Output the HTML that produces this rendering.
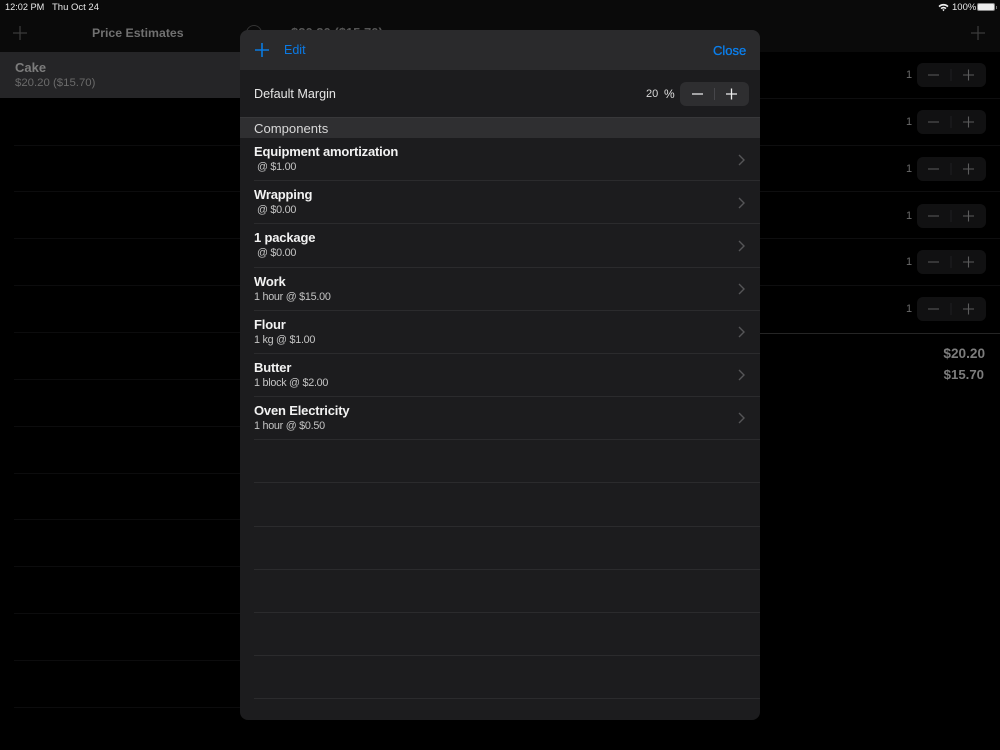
<!DOCTYPE html>
<html><head><meta charset="utf-8"><style>
html,body{margin:0;padding:0;background:#000}
#p{position:relative;width:1000px;height:750px;overflow:hidden;background:#000;font-family:"Liberation Sans",sans-serif;}
#p div,#p span.a,#p svg{position:absolute}
.t{white-space:nowrap;line-height:1}
.ls{left:14px;width:226px;height:1px;background:#0c0c0d}
.rs{left:760px;width:240px;height:1px;background:#0e0e0f}
.st{left:917px;width:69px;height:24px;border-radius:6px;background:#111112}
.n{left:906px;font-size:11px;color:#6a6a6a}
.row{left:254px;font-size:13px;font-weight:bold;color:#f2f2f2;letter-spacing:-.18px}
.sub{font-size:10.8px;color:#c4c4c4;letter-spacing:-.27px}
.sep{left:254px;width:506px;height:1px;background:#2b2b2d}
</style></head><body><div id="p">
<div style="left:0;top:0;width:1000px;height:52px;background:#0a0a0a"></div>
<div style="left:0;top:52px;width:240px;height:46px;background:#252527"></div>
<div class="t" style="left:5px;top:3px;font-size:9.2px;color:#e8e8e8">12:02 PM</div>
<div class="t" style="left:52px;top:3px;font-size:9.5px;color:#e8e8e8">Thu Oct 24</div>
<svg style="left:938px;top:3px" width="11" height="9" viewBox="0 0 11 9"><path d="M0.5 3 A7 7 0 0 1 10.5 3 L9.3 4.2 A5.3 5.3 0 0 0 1.7 4.2Z M2.5 5 A4.2 4.2 0 0 1 8.5 5 L7.4 6.1 A2.7 2.7 0 0 0 3.6 6.1Z M4.4 6.9 A1.5 1.5 0 0 1 6.6 6.9 L5.5 8.2Z" fill="#eee"/></svg>
<div class="t" style="left:952px;top:3px;font-size:9.5px;color:#e8e8e8">100%</div>
<div style="left:977px;top:3px;width:18px;height:8px;background:#eee;border-radius:2px;border:1px solid #888;box-sizing:border-box"></div>
<div style="left:995.5px;top:6px;width:1.5px;height:3px;background:#777"></div>
<svg style="left:13px;top:26px" width="14" height="14"><path d="M7 0V14M0 7H14" stroke="#3a3a3a" stroke-width="1.3"/></svg>
<svg style="left:971px;top:26px" width="14" height="14"><path d="M7 0V14M0 7H14" stroke="#3a3a3a" stroke-width="1.3"/></svg>
<div class="t" style="left:92px;top:27px;font-size:12.3px;font-weight:bold;color:#707070">Price Estimates</div>
<div style="left:246px;top:25px;width:14px;height:14px;border:1px solid #333;border-radius:50%"></div>
<div class="t" style="left:291px;top:26px;font-size:13px;font-weight:bold;color:#555">$20.20 ($15.70)</div>
<div class="t" style="left:15px;top:61px;font-size:13px;font-weight:bold;color:#7c7c7c">Cake</div>
<div class="t" style="left:15px;top:78px;font-size:11.4px;color:#6a6a6a">$20.20 ($15.70)</div>
<div class="ls" style="top:145px"></div><div class="ls" style="top:191px"></div><div class="ls" style="top:238px"></div><div class="ls" style="top:285px"></div><div class="ls" style="top:332px"></div><div class="ls" style="top:379px"></div><div class="ls" style="top:426px"></div><div class="ls" style="top:473px"></div><div class="ls" style="top:519px"></div><div class="ls" style="top:566px"></div><div class="ls" style="top:613px"></div><div class="ls" style="top:660px"></div><div class="ls" style="top:707px"></div>
<div class="rs" style="top:98px"></div><div class="rs" style="top:145px"></div><div class="rs" style="top:191px"></div><div class="rs" style="top:238px"></div><div class="rs" style="top:285px"></div>
<div style="left:760px;top:333px;width:240px;height:1px;background:#252525"></div>
<div class="st" style="top:63px"></div><div class="st" style="top:110px"></div><div class="st" style="top:157px"></div><div class="st" style="top:204px"></div><div class="st" style="top:250px"></div><div class="st" style="top:297px"></div>
<div class="t n" style="top:70px">1</div><div class="t n" style="top:117px">1</div><div class="t n" style="top:164px">1</div><div class="t n" style="top:211px">1</div><div class="t n" style="top:257px">1</div><div class="t n" style="top:304px">1</div>
<svg style="left:917px;top:63px" width="69" height="260" fill="none" stroke="#5c5c5c" stroke-width="1.1"><path d="M11 12H22M46 12H57M51.5 6.5V17.5M11 59H22M46 59H57M51.5 53.5V64.5M11 106H22M46 106H57M51.5 100.5V111.5M11 153H22M46 153H57M51.5 147.5V158.5M11 199H22M46 199H57M51.5 193.5V204.5M11 246H22M46 246H57M51.5 240.5V251.5"/><path d="M34 6V18M34 53V65M34 100V112M34 147V159M34 193V205M34 240V252" stroke="#202021" stroke-width="1"/></svg>
<div class="t" style="right:15px;top:347px;font-size:13.6px;font-weight:bold;color:#7c7c7c">$20.20</div>
<div class="t" style="right:16px;top:368px;font-size:13.2px;font-weight:bold;color:#7c7c7c">$15.70</div>

<div style="left:240px;top:30px;width:520px;height:690px;background:#1c1c1e;border-radius:8px;overflow:hidden">
<div style="left:0;top:0;width:520px;height:40px;background:#2a2a2c"></div>
<div style="left:0;top:87px;width:520px;height:21px;background:#2f2f31;border-top:1px solid #38383a;box-sizing:border-box"></div>
</div>
<svg style="left:255px;top:43px" width="14" height="14"><path d="M7 0V14M0 7H14" stroke="#0a7ae0" stroke-width="1.6"/></svg>
<div class="t" style="left:284px;top:44px;font-size:12.5px;color:#0a7ae6">Edit</div>
<div class="t" style="left:713px;top:44px;font-size:13px;color:#0a80f0;-webkit-text-stroke:.3px #0a80f0">Close</div>
<div class="t" style="left:254px;top:88px;font-size:12.6px;color:#e6e6e6">Default Margin</div>
<div class="t" style="left:646px;top:89px;font-size:11px;color:#d8d8d8">20</div>
<div class="t" style="left:664px;top:88px;font-size:12px;color:#e0e0e0">%</div>
<div style="left:680px;top:82px;width:69px;height:24px;border-radius:6px;background:#2e2e30"></div>
<svg style="left:680px;top:82px" width="69" height="24" fill="none" stroke="#ececec" stroke-width="1.3"><path d="M12 12H23M46 12H57M51.5 6.5V17.5"/><path d="M34.5 6V18" stroke="#46464a" stroke-width="1"/></svg>
<div class="t" style="left:254px;top:122px;font-size:13.1px;color:#d8d8d8">Components</div>

<div class="t row" style="top:145px">Equipment amortization</div><div class="t sub" style="left:257px;top:162px">@ $1.00</div>
<div class="t row" style="top:188px">Wrapping</div><div class="t sub" style="left:257px;top:205px">@ $0.00</div>
<div class="t row" style="top:231px">1 package</div><div class="t sub" style="left:257px;top:248px">@ $0.00</div>
<div class="t row" style="top:275px">Work</div><div class="t sub" style="left:254px;top:292px">1 hour @ $15.00</div>
<div class="t row" style="top:318px">Flour</div><div class="t sub" style="left:254px;top:335px">1 kg @ $1.00</div>
<div class="t row" style="top:361px">Butter</div><div class="t sub" style="left:254px;top:378px">1 block @ $2.00</div>
<div class="t row" style="top:404px">Oven Electricity</div><div class="t sub" style="left:254px;top:421px">1 hour @ $0.50</div>
<div class="sep" style="top:180px"></div><div class="sep" style="top:223px"></div><div class="sep" style="top:267px"></div><div class="sep" style="top:310px"></div><div class="sep" style="top:353px"></div><div class="sep" style="top:396px"></div><div class="sep" style="top:439px"></div><div class="sep" style="top:482px"></div><div class="sep" style="top:526px"></div><div class="sep" style="top:569px"></div><div class="sep" style="top:612px"></div><div class="sep" style="top:655px"></div><div class="sep" style="top:698px"></div>
<svg style="left:738px;top:150px" width="8" height="280" fill="none" stroke="#555557" stroke-width="1.4"><path d="M1 5L6 10L1 15M1 48L6 53L1 58M1 91L6 96L1 101M1 134L6 139L1 144M1 177L6 182L1 187M1 220L6 225L1 230M1 263L6 268L1 273"/></svg>
</div></body></html>
